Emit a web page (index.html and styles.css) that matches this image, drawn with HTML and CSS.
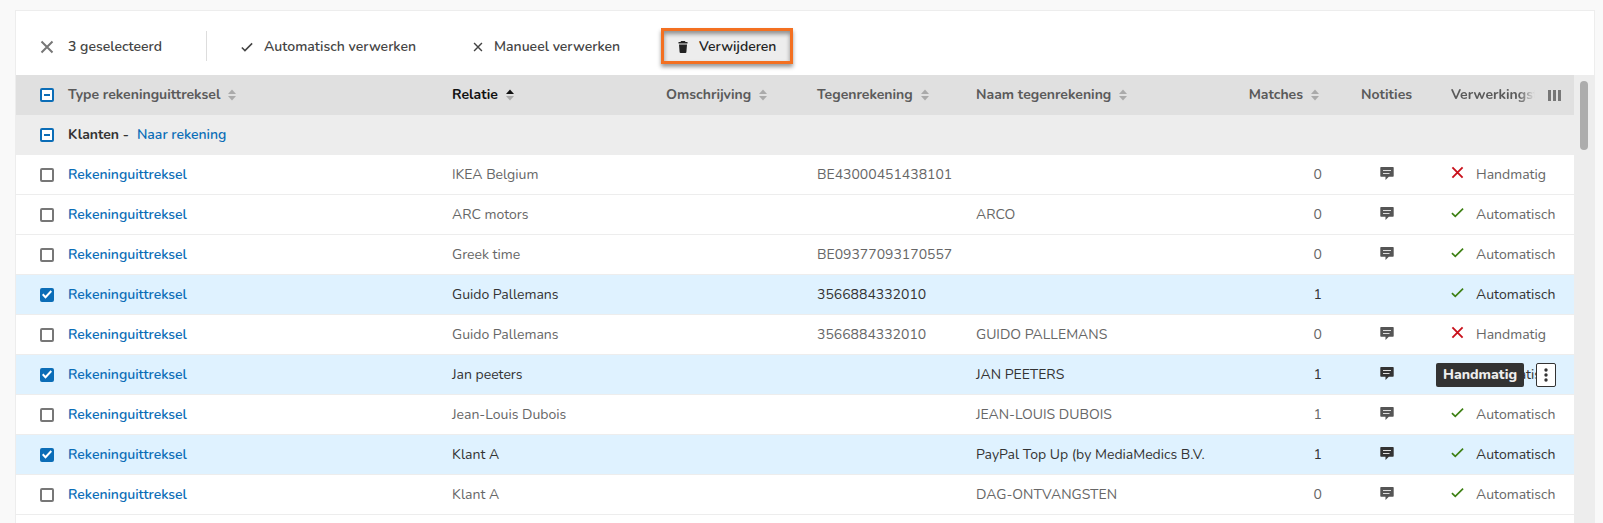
FILE: index.html
```html
<!DOCTYPE html>
<html lang="nl">
<head>
  <meta charset="UTF-8" />
  <meta name="viewport" content="width=device-width, initial-scale=1" />
  <title>Rekeninguittreksels</title>
  <link rel="stylesheet" href="styles.css">
</head>
<body>
  <!-- icons -->
  <svg class="sprite" aria-hidden="true">
    <symbol id="i-close" viewBox="0 0 14 14"><path d="M1.5 1.5l11 11M12.5 1.5l-11 11" fill="none" stroke="currentColor" stroke-width="2"/></symbol>
    <symbol id="i-check" viewBox="0 0 14 14"><path d="M1 7.6l3.6 3.6L13 2.8" fill="none" stroke="currentColor" stroke-width="1.8"/></symbol>
    <symbol id="i-trash" viewBox="0 0 10 12"><path d="M3.2 0h3.6l.8 1H9.5v1.6h-9V1h1.9zM1 3.6h8l-.6 7.4a1 1 0 0 1-1 1H2.6a1 1 0 0 1-1-1z" fill="currentColor"/></symbol>
    <symbol id="i-note" viewBox="0 0 14 13"><path d="M1 0h12a.7.7 0 0 1 .7.7V9a.7.7 0 0 1-.7.7H8.8L5.5 13V9.700H1A.7.7 0 0 1 .3 9V.7A.7.7 0 0 1 1 0z" fill="currentColor"/><path d="M3 3.5h8M3 6.5h6.500" stroke="#ddd" stroke-width="1"/></symbol>
    <symbol id="i-sort" viewBox="0 0 8 12"><path class="up" d="M4 .5l4 4.500H0z"/><path class="down" d="M4 11.500L0 7h8z"/></symbol>
    <symbol id="i-dots" viewBox="0 0 4 14"><circle cx="2" cy="2" r="1.700"/><circle cx="2" cy="7" r="1.700"/><circle cx="2" cy="12" r="1.700"/></symbol>
  </svg>

  <main class="card">
    <div class="toolbar">
      <button class="tool clear" aria-label="Selectie wissen"><svg class="i14"><use href="#i-close"/></svg></button>
      <span class="count">3 geselecteerd</span>
      <div class="actions">
        <button class="tool"><svg class="i12"><use href="#i-check"/></svg>Automatisch verwerken</button>
        <button class="tool"><svg class="i10"><use href="#i-close"/></svg>Manueel verwerken</button>
        <button class="tool delete"><svg class="trash"><use href="#i-trash"/></svg>Verwijderen</button>
      </div>
    </div>

    <div class="grid">
      <table>
        <colgroup>
          <col class="c-check"><col><col class="c-rel"><col class="c-oms"><col class="c-teg">
          <col class="c-naam"><col class="c-match"><col class="c-note"><col class="c-status">
        </colgroup>
        <thead>
          <tr>
            <th><input type="checkbox" class="mixed" aria-label="Alles selecteren"></th>
            <th>Type rekeninguittreksel<svg class="sort"><use href="#i-sort"/></svg></th>
            <th class="sorted">Relatie<svg class="sort"><use href="#i-sort"/></svg></th>
            <th>Omschrijving<svg class="sort"><use href="#i-sort"/></svg></th>
            <th>Tegenrekening<svg class="sort"><use href="#i-sort"/></svg></th>
            <th>Naam tegenrekening<svg class="sort"><use href="#i-sort"/></svg></th>
            <th class="match">Matches<svg class="sort"><use href="#i-sort"/></svg></th>
            <th class="note">Notities</th>
            <th>
              <div class="last-head">
                <span class="fade">Verwerkingstype</span>
                <button class="columns" aria-label="Kolommen"></button>
              </div>
            </th>
          </tr>
        </thead>
        <tbody>
          <tr class="group">
            <td><input type="checkbox" class="mixed" aria-label="Klanten selecteren"></td>
            <td colspan="8"><strong>Klanten -</strong><a href="#">Naar rekening</a></td>
          </tr>
          <tr>
            <td><input type="checkbox" aria-label="Selecteer rij"></td>
            <td><a href="#">Rekeninguittreksel</a></td>
            <td>IKEA Belgium</td><td></td><td>BE43000451438101</td><td></td>
            <td class="match">0</td>
            <td class="note"><svg class="memo"><use href="#i-note"/></svg></td>
            <td class="status"><svg class="no"><use href="#i-close"/></svg>Handmatig</td>
          </tr>
          <tr>
            <td><input type="checkbox" aria-label="Selecteer rij"></td>
            <td><a href="#">Rekeninguittreksel</a></td>
            <td>ARC motors</td><td></td><td></td><td>ARCO</td>
            <td class="match">0</td>
            <td class="note"><svg class="memo"><use href="#i-note"/></svg></td>
            <td class="status"><svg class="yes"><use href="#i-check"/></svg>Automatisch</td>
          </tr>
          <tr>
            <td><input type="checkbox" aria-label="Selecteer rij"></td>
            <td><a href="#">Rekeninguittreksel</a></td>
            <td>Greek time</td><td></td><td>BE09377093170557</td><td></td>
            <td class="match">0</td>
            <td class="note"><svg class="memo"><use href="#i-note"/></svg></td>
            <td class="status"><svg class="yes"><use href="#i-check"/></svg>Automatisch</td>
          </tr>
          <tr class="selected">
            <td><input type="checkbox" aria-label="Selecteer rij" checked></td>
            <td><a href="#">Rekeninguittreksel</a></td>
            <td>Guido Pallemans</td><td></td><td>3566884332010</td><td></td>
            <td class="match">1</td>
            <td class="note"></td>
            <td class="status"><svg class="yes"><use href="#i-check"/></svg>Automatisch</td>
          </tr>
          <tr>
            <td><input type="checkbox" aria-label="Selecteer rij"></td>
            <td><a href="#">Rekeninguittreksel</a></td>
            <td>Guido Pallemans</td><td></td><td>3566884332010</td><td>GUIDO PALLEMANS</td>
            <td class="match">0</td>
            <td class="note"><svg class="memo"><use href="#i-note"/></svg></td>
            <td class="status"><svg class="no"><use href="#i-close"/></svg>Handmatig</td>
          </tr>
          <tr class="selected">
            <td><input type="checkbox" aria-label="Selecteer rij" checked></td>
            <td><a href="#">Rekeninguittreksel</a></td>
            <td>Jan peeters</td><td></td><td></td><td>JAN PEETERS</td>
            <td class="match">1</td>
            <td class="note"><svg class="memo"><use href="#i-note"/></svg></td>
            <td class="status"><svg class="yes"><use href="#i-check"/></svg>Automatisch
              <span class="tooltip" role="tooltip">Handmatig</span>
              <button class="menu" aria-label="Meer"><svg class="dots"><use href="#i-dots"/></svg></button>
            </td>
          </tr>
          <tr>
            <td><input type="checkbox" aria-label="Selecteer rij"></td>
            <td><a href="#">Rekeninguittreksel</a></td>
            <td>Jean-Louis Dubois</td><td></td><td></td><td>JEAN-LOUIS DUBOIS</td>
            <td class="match">1</td>
            <td class="note"><svg class="memo"><use href="#i-note"/></svg></td>
            <td class="status"><svg class="yes"><use href="#i-check"/></svg>Automatisch</td>
          </tr>
          <tr class="selected">
            <td><input type="checkbox" aria-label="Selecteer rij" checked></td>
            <td><a href="#">Rekeninguittreksel</a></td>
            <td>Klant A</td><td></td><td></td><td>PayPal Top Up (by MediaMedics B.V.</td>
            <td class="match">1</td>
            <td class="note"><svg class="memo"><use href="#i-note"/></svg></td>
            <td class="status"><svg class="yes"><use href="#i-check"/></svg>Automatisch</td>
          </tr>
          <tr>
            <td><input type="checkbox" aria-label="Selecteer rij"></td>
            <td><a href="#">Rekeninguittreksel</a></td>
            <td>Klant A</td><td></td><td></td><td>DAG-ONTVANGSTEN</td>
            <td class="match">0</td>
            <td class="note"><svg class="memo"><use href="#i-note"/></svg></td>
            <td class="status"><svg class="yes"><use href="#i-check"/></svg>Automatisch</td>
          </tr>
        </tbody>
      </table>
      <div class="scrollbar"><div class="thumb"></div></div>
    </div>
  </main>
</body>
</html>
```
FILE: styles.css
```css
* {
  box-sizing: border-box;
}

body {
  margin: 0;
  height: 100vh;
  padding: 10px 8px 0 15px;
  overflow: hidden;
  display: flex;
  background: #f9f9f9;
  color: #666;
  font-family: Nunito, "Open Sans", sans-serif;
  font-size: 14px;
  line-height: 20px;
}

button {
  font: inherit;
  color: inherit;
  background: none;
  border: none;
  padding: 0;
  cursor: pointer;
}

a {
  color: #0b6db7;
  text-decoration: none;
  font-weight: 600;
}

.sprite {
  position: absolute;
  width: 0;
  height: 0;
}

.card {
  flex: 1;
  display: flex;
  flex-direction: column;
  background: #fff;
  border: 1px solid #ededed;
  border-bottom: none;
}

/* toolbar */
.toolbar {
  display: flex;
  align-items: center;
  flex-shrink: 0;
  height: 64px;
  padding: 6px 24px 0;
  color: #444;
  font-weight: 600;
}

.tool {
  display: flex;
  align-items: center;
  gap: 11px;
  height: 36px;
  padding: 2px 16px 0;
}

.clear {
  width: 28px;
  padding: 2px 0 0;
  color: #777;
}

.count {
  width: 138px;
  padding-top: 2px;
}

.actions {
  display: flex;
  align-items: center;
  gap: 25px;
  height: 30px;
  padding-left: 18px;
  border-left: 1px solid #ddd;
}

.i14 { width: 14px; height: 14px; }
.i12 { width: 12px; height: 12px; }
.i10 { width: 10px; height: 10px; }
.trash { width: 10px; height: 12px; }

.delete {
  padding: 2px 14px 0;
  background: #ededed;
  border: 3px solid #f37021;
  color: #222;
  box-shadow: 0 3px 4px rgba(0, 0, 0, 0.4), inset 0 3px 4px rgba(0, 0, 0, 0.4);
}

/* table */
.grid {
  flex: 1;
  display: flex;
  align-items: flex-start;
  min-height: 0;
}

table {
  flex: 1;
  width: 100%;
  table-layout: fixed;
  border-collapse: separate;
  border-spacing: 0;
}

.c-check { width: 52px; }
.c-rel { width: 214px; }
.c-oms { width: 151px; }
.c-teg { width: 159px; }
.c-naam { width: 260px; }
.c-match { width: 86px; }
.c-note { width: 129px; }
.c-status { width: 123px; }

th,
td {
  height: 40px;
  padding: 0;
  text-align: left;
  white-space: nowrap;
}

td {
  border-bottom: 1px solid #ededed;
}

td:first-child,
th:first-child {
  padding-left: 24px;
}

th {
  background: #e0e0e0;
  color: #5a5a5a;
  font-weight: 700;
}

.group td {
  background: #ededed;
}

.group strong {
  margin-right: 8px;
  color: #333;
  font-weight: 700;
}

.selected td {
  background: #dff2ff;
  color: #333;
}

th.sorted {
  color: #111;
}

.sort {
  width: 8px;
  height: 12px;
  margin-left: 8px;
  vertical-align: -2px;
  fill: #aaa;
}

.up {
  fill: var(--sort-up, #aaa);
}

.sorted {
  --sort-up: #111;
}

th.match,
td.match {
  text-align: right;
}

th.match {
  padding-right: 3px;
}

th.note,
td.note {
  text-align: center;
}

.memo {
  width: 14px;
  height: 13px;
  vertical-align: -1px;
  color: #555;
}

.selected .memo {
  color: #333;
}

.status {
  position: relative;
}

.no,
.yes {
  width: 13px;
  height: 13px;
  margin-right: 12px;
}

.no { color: #c8101a; }
.yes { color: #3d8014; }

.last-head {
  display: flex;
  align-items: center;
  gap: 13px;
}

.fade {
  width: 84px;
  overflow: hidden;
  -webkit-mask-image: linear-gradient(to right, #000 80%, transparent);
  mask-image: linear-gradient(to right, #000 80%, transparent);
}

.columns {
  width: 13px;
  height: 11px;
  background: repeating-linear-gradient(to right, #777 0 3px, transparent 3px 5px);
}

/* checkboxes */
input[type="checkbox"] {
  appearance: none;
  display: block;
  width: 14px;
  height: 14px;
  margin: 0;
  border: 2px solid #777;
  border-radius: 2px;
  background: #fff;
}

input[type="checkbox"].mixed,
input[type="checkbox"]:checked {
  border-color: #0b6db7;
}

input.mixed::before {
  content: "";
  display: block;
  width: 6px;
  height: 2px;
  margin: 4px 2px;
  background: #0b6db7;
}

input[type="checkbox"]:checked {
  background: #0b6db7;
}

input[type="checkbox"]:checked::before {
  content: "";
  display: block;
  width: 10px;
  height: 10px;
  background: #fff;
  clip-path: polygon(0 55%, 14% 41%, 35% 62%, 86% 8%, 100% 22%, 35% 92%);
}

/* row overlays */
.tooltip {
  position: absolute;
  left: -15px;
  top: 8px;
  width: 88px;
  line-height: 24px;
  border-radius: 2px;
  background: #333;
  color: #eee;
  font-weight: 800;
  text-align: center;
}

.menu {
  position: absolute;
  right: 18px;
  top: 8px;
  display: flex;
  align-items: center;
  justify-content: center;
  width: 20px;
  height: 24px;
  border: 1px solid #333;
  border-radius: 2px;
  background: #fff;
}

.dots {
  width: 4px;
  height: 14px;
  fill: #333;
}

/* scrollbar */
.scrollbar {
  align-self: stretch;
  width: 20px;
  padding: 6px;
  background: #ededed;
}

.thumb {
  width: 8px;
  height: 69px;
  border-radius: 4px;
  background: #adadad;
}
```
